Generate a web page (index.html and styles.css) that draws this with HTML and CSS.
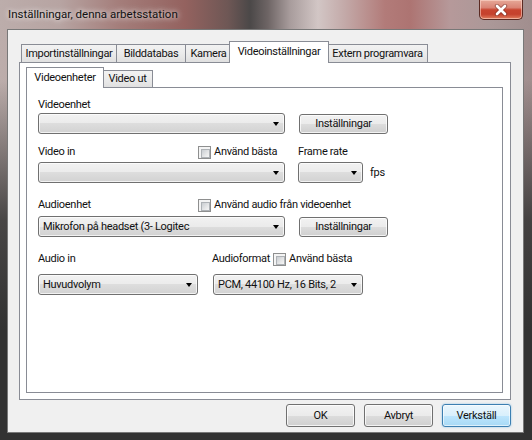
FILE: index.html
```html
<!DOCTYPE html>
<html>
<head>
<meta charset="utf-8">
<link rel="stylesheet" href="styles.css">
</head>
<body>
<div class="window">
  <div class="titlebar">
    <span class="title">Inställningar, denna arbetsstation</span>
    <div class="close">
      <svg width="14" height="12" viewBox="0 0 14 12">
        <path d="M3 2 L11 10 M11 2 L3 10" stroke="#6a2a20" stroke-width="4.4" stroke-linecap="round" fill="none" opacity="0.55"/>
        <path d="M3 2 L11 10 M11 2 L3 10" stroke="#ffffff" stroke-width="2.6" stroke-linecap="round" fill="none"/>
      </svg>
    </div>
  </div>
  <div class="client">
    <div class="tabctl">
      <div class="strip outer-strip">
        <div class="tab otab t-import">Importinställningar</div>
        <div class="tab otab t-bild">Bilddatabas</div>
        <div class="tab otab t-kamera">Kamera</div>
        <div class="tab otab active t-video">Videoinställningar</div>
        <div class="tab otab last t-extern">Extern programvara</div>
      </div>
      <div class="panel outer-panel">
        <div class="strip inner-strip">
          <div class="tab itab active t-enh">Videoenheter</div>
          <div class="tab itab last t-ut">Video ut</div>
        </div>
        <div class="panel inner-panel">
          <div class="row lbl r-a"><span>Videoenhet</span></div>
          <div class="row ctl r-b">
            <div class="combo w-wide"><span class="ctext"></span><span class="arrow"></span></div>
            <div class="btn w-set">Inställningar</div>
          </div>
          <div class="row lbl r-c">
            <span class="col-160">Video in</span>
            <label class="check col-100"><span class="chk"></span><span>Använd bästa</span></label>
            <span>Frame rate</span>
          </div>
          <div class="row ctl r-d">
            <div class="combo w-wide"><span class="ctext"></span><span class="arrow"></span></div>
            <div class="combo w-fps"><span class="ctext"></span><span class="arrow"></span></div>
            <span class="fps">fps</span>
          </div>
          <div class="row lbl r-e">
            <span class="col-160">Audioenhet</span>
            <label class="check"><span class="chk"></span><span>Använd audio från videoenhet</span></label>
          </div>
          <div class="row ctl r-f">
            <div class="combo w-wide"><span class="ctext">Mikrofon på headset (3- Logitec</span><span class="arrow"></span></div>
            <div class="btn w-set">Inställningar</div>
          </div>
          <div class="row lbl r-g">
            <span class="col-174">Audio in</span>
            <span class="afmt">Audioformat</span>
            <label class="check"><span class="chk"></span><span>Använd bästa</span></label>
          </div>
          <div class="row ctl r-h">
            <div class="combo w-vol"><span class="ctext">Huvudvolym</span><span class="arrow"></span></div>
            <div class="combo w-pcm"><span class="ctext">PCM, 44100 Hz, 16 Bits, 2</span><span class="arrow"></span></div>
          </div>
        </div>
      </div>
    </div>
    <div class="buttons">
      <div class="btn dlg">OK</div>
      <div class="btn dlg">Avbryt</div>
      <div class="btn dlg default">Verkställ</div>
    </div>
  </div>
</div>
</body>
</html>
```

FILE: styles.css
```css
* { box-sizing: border-box; }
html, body { margin: 0; padding: 0; }
body {
  width: 532px;
  height: 440px;
  overflow: hidden;
  font-family: Roboto, "Liberation Sans", sans-serif;
  font-size: 11px;
  letter-spacing: -0.3px;
  color: #111;
  background: #3a3a3a;
}
.window {
  width: 532px;
  height: 440px;
  display: flex;
  flex-direction: column;
  background:
    linear-gradient(to bottom, rgba(52,52,52,0) 0px, rgba(52,52,52,0) 80px, rgba(52,52,52,0.85) 220px, rgba(50,50,50,1) 330px),
    linear-gradient(to right, #bcadab 0px, #b7a4a2 60px, #a47d7a 120px, #94625f 185px, #6e5755 228px, #4b4848 250px, #6e6565 268px, #a89c9c 290px, #d2c6c5 318px, #c3a9a8 345px, #b27b79 385px, #ad7472 410px, #b6999a 450px, #ab9898 490px, #a18e8e 532px);
}
.titlebar {
  height: 29px;
  flex: none;
  display: flex;
  align-items: flex-start;
}
.title {
  padding: 7px 0 0 8px;
  line-height: 14px;
  font-size: 11.5px;
  letter-spacing: 0;
  color: #111;
  text-shadow: 0 0 5px rgba(255,255,255,0.85), 0 0 9px rgba(255,255,255,0.6);
}
.close {
  margin-left: auto;
  margin-right: 9px;
  width: 44px;
  height: 20px;
  border: 1px solid #5b2a22;
  border-top: none;
  border-radius: 0 0 5px 5px;
  background: linear-gradient(to bottom, #e6a898 0%, #da8475 40%, #c8442f 52%, #c5412d 75%, #e07e5e 100%);
  box-shadow: inset 0 0 0 1px rgba(255,220,210,0.55);
  display: flex;
  align-items: center;
  justify-content: center;
}
.client {
  flex: 1;
  margin: 0 8px 7px 7px;
  background: #f0f0f0;
  border: 1px solid rgba(40,40,40,0.6);
  padding: 11px 12px 5px 11px;
  display: flex;
  flex-direction: column;
}
.tabctl {
  height: 359px;
  display: flex;
  flex-direction: column;
}
.strip {
  display: flex;
  align-items: flex-end;
  position: relative;
  z-index: 2;
  flex: none;
}
.outer-strip { height: 21px; padding-left: 2px; }
.inner-strip { height: 20px; padding-left: 2px; margin-top: 4px; }
.tab {
  border: 1px solid #898c95;
  border-bottom: none;
  border-right: none;
  background: linear-gradient(to bottom, #f2f2f2 0%, #ebebeb 50%, #e0e0e0 100%);
  text-align: center;
  white-space: nowrap;
  flex: none;
}
.tab.last { border-right: 1px solid #898c95; }
.otab { height: 18px; line-height: 17px; }
.itab { height: 17px; line-height: 16px; }
.tab.active {
  background: #fff;
  border-right: 1px solid #898c95;
  margin: 0 -2px -1px -2px;
  position: relative;
  z-index: 3;
}
.otab.active { height: 22px; line-height: 19px; }
.itab.active { height: 21px; line-height: 19px; }
.t-import { width: 95px; }
.t-bild { width: 69px; }
.t-kamera { width: 46px; }
.t-video { width: 100px; }
.t-extern { width: 101px; }
.t-enh { width: 78px; }
.t-ut { width: 51px; }
.panel {
  border: 1px solid #898c95;
  background: #fff;
}
.outer-panel {
  height: 338px;
  display: flex;
  flex-direction: column;
  padding: 0 7px 6px 6px;
}
.inner-panel {
  height: 306px;
  padding-left: 11px;
  display: flex;
  flex-direction: column;
}
.row { display: flex; align-items: center; flex: none; }
.lbl { height: 14px; line-height: 14px; }
.ctl { height: 21px; }
.r-a { margin-top: 10px; }
.r-b { margin-top: 1px; }
.r-c { margin-top: 11px; }
.r-d { margin-top: 3px; }
.r-e { margin-top: 15px; }
.r-f { margin-top: 4px; }
.r-g { margin-top: 15px; }
.r-h { margin-top: 8px; }
.col-160 { width: 160px; flex: none; }
.col-100 { width: 100px; flex: none; }
.col-174 { width: 174px; flex: none; }
.afmt { width: 61px; flex: none; white-space: nowrap; }
.check { display: flex; align-items: center; white-space: nowrap; }
.chk {
  width: 13px;
  height: 13px;
  flex: none;
  border: 1px solid #8e8f8f;
  background: #f4f4f4;
  padding: 2px;
  margin-right: 3px;
}
.chk::before {
  content: "";
  display: block;
  width: 100%;
  height: 100%;
  border: 1px solid #aeb2b6;
  background: linear-gradient(135deg, #c9cdd1 0%, #e6e7e8 60%, #f6f6f6 100%);
}
.combo {
  height: 21px;
  border: 1px solid #707070;
  border-radius: 3px;
  background: linear-gradient(to bottom, #f2f2f2 0%, #ebebeb 50%, #dddddd 50%, #d2d2d2 100%);
  box-shadow: inset 0 0 0 1px rgba(255,255,255,0.7);
  display: flex;
  align-items: center;
  padding: 0 4px 0 4px;
  flex: none;
}
.ctext { flex: 1; white-space: nowrap; overflow: hidden; }
.arrow {
  width: 0;
  height: 0;
  border-left: 3.5px solid transparent;
  border-right: 3.5px solid transparent;
  border-top: 4px solid #000;
  margin-right: 1px;
  flex: none;
}
.w-wide { width: 247px; }
.w-fps { width: 65px; margin-left: 13px; }
.w-vol { width: 160px; }
.w-pcm { width: 150px; margin-left: 15px; }
.fps { margin-left: 7px; }
.btn {
  height: 20px;
  border: 1px solid #707070;
  border-radius: 3px;
  background: linear-gradient(to bottom, #f2f2f2 0%, #ebebeb 50%, #dddddd 50%, #cfcfcf 100%);
  box-shadow: inset 0 0 0 1px rgba(255,255,255,0.75);
  display: flex;
  align-items: center;
  justify-content: center;
  flex: none;
}
.w-set { width: 89px; margin-left: 14px; }
.buttons {
  margin-top: 4px;
  height: 23px;
  display: flex;
  justify-content: flex-end;
  gap: 9px;
  flex: none;
}
.dlg { width: 69px; height: 23px; }
.btn.default {
  border-color: #3c7fb1;
  background: linear-gradient(to bottom, #eaf6fd 0%, #d9f0fc 50%, #bee6fd 50%, #a7d9f5 100%);
  box-shadow: inset 0 0 0 1px rgba(255,255,255,0.6), 0 0 2px rgba(60,160,230,0.6);
}
```
